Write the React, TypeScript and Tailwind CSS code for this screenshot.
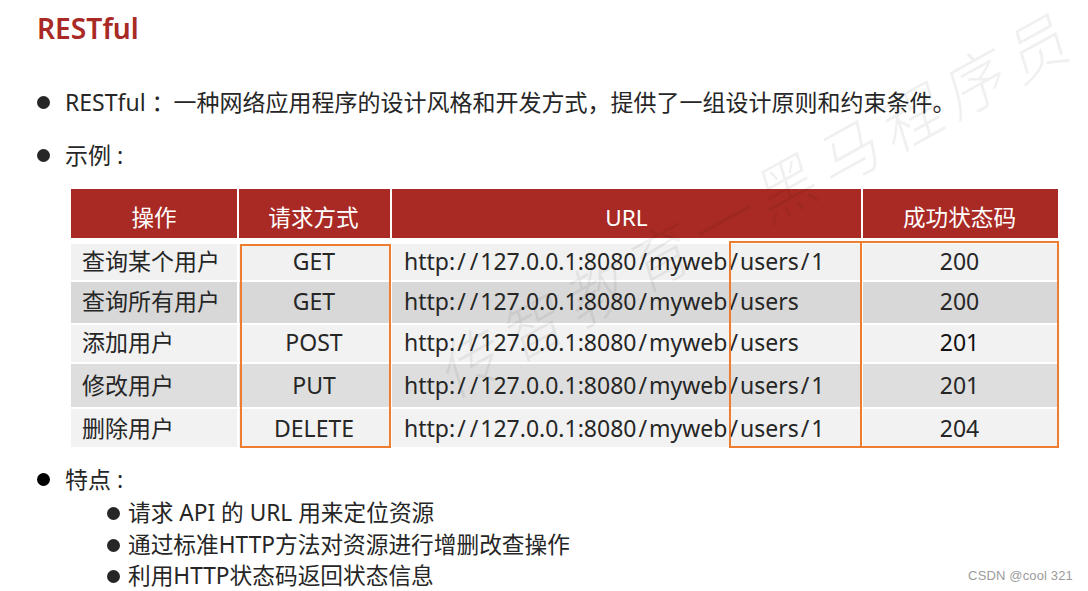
const rows = [
  { name: '查询某个用户', method: 'GET', url: 'http://127.0.0.1:8080/myweb/users/1', code: '200', h: 'h-[36px]', bg: 'bg-[#f1f1f1]', lift: 'pb-[2px]' },
  { name: '查询所有用户', method: 'GET', url: 'http://127.0.0.1:8080/myweb/users', code: '200', h: 'h-[41px]', bg: 'bg-[#d8d8d8]', lift: 'pb-[2px]' },
  { name: '添加用户', method: 'POST', url: 'http://127.0.0.1:8080/myweb/users', code: '201', h: 'h-[37px]', bg: 'bg-[#f2f2f2]', lift: 'pb-[2px]' },
  { name: '修改用户', method: 'PUT', url: 'http://127.0.0.1:8080/myweb/users/1', code: '201', h: 'h-[43px]', bg: 'bg-[#dedede]', lift: '' },
  { name: '删除用户', method: 'DELETE', url: 'http://127.0.0.1:8080/myweb/users/1', code: '204', h: 'h-[38px]', bg: 'bg-[#f2f2f2]', lift: '' },
];

const subItems = ['请求 API 的 URL 用来定位资源', '通过标准HTTP方法对资源进行增删改查操作', '利用HTTP状态码返回状态信息'];

function Dot({ className = 'bg-[#262626]' }: { className?: string }) {
  return <span className={`block w-[13px] h-[13px] rounded-full shrink-0 ${className}`}></span>;
}

// the slashes sit wider apart than the font sets them
function Url({ value }: { value: string }) {
  const parts = value.split('/');
  return (
    <span>
      {parts.map((part, i) => (
        <span key={i}>
          {i > 0 && <span className="px-[2px]">/</span>}
          {part}
        </span>
      ))}
    </span>
  );
}

export default function App() {
  return (
    <div className="relative w-[1088px] h-[591px] overflow-hidden bg-white text-[#262626] font-['Noto_Sans','Noto_Sans_CJK_SC',sans-serif]">
      <div className="pl-[37px] pt-[9px]">
        <h1 className="text-[28.2px] leading-[38px] font-semibold text-[#a92a25]">RESTful</h1>

        <div className="mt-[39px] flex items-center h-[32px] text-[23px]">
          <Dot />
          <p className="ml-[16px] -translate-x-px whitespace-nowrap">RESTful ：<span className="-ml-[1px]">一种网络应用程序的设计风格和开发方式，提供了一组设计原则和约束条件。</span></p>
        </div>
        <div className="mt-[21px] flex items-center h-[32px] text-[23px]">
          <Dot />
          <p className="ml-[16px] -translate-x-px whitespace-nowrap">示例 :</p>
        </div>
      </div>

      {/* table */}
      <div className="relative ml-[71px] mt-[18px] w-[987px]">
        <div className="flex gap-[2px] h-[49px] text-white text-[22.6px] mb-[6px]">
          <div className="w-[166px] bg-[#a92a25] flex items-center justify-center pt-[9px]">操作</div>
          <div className="w-[151px] bg-[#a92a25] flex items-center justify-center pt-[9px] pr-[2px]">请求方式</div>
          <div className="w-[469px] bg-[#a92a25] flex items-center justify-center pt-[9px]">URL</div>
          <div className="w-[195px] bg-[#a92a25] flex items-center justify-center pt-[9px] pr-[2px]">成功状态码</div>
        </div>
        <div className="flex flex-col gap-[2px] text-[23px]">
          {rows.map((row) => (
            <div key={row.name} className={`flex gap-[2px] ${row.h}`}>
              <div className={`w-[166px] pl-[11px] flex items-center ${row.bg} ${row.lift}`}>{row.name}</div>
              <div className={`w-[151px] pr-[1px] flex items-center justify-center ${row.bg} ${row.lift}`}>{row.method}</div>
              <div className={`w-[469px] pl-[12px] flex items-center ${row.bg} ${row.lift}`}><Url value={row.url} /></div>
              <div className={`w-[195px] pr-[2px] flex items-center justify-center ${row.bg} ${row.lift} ${row.name === '添加用户' ? 'text-[#111111]' : ''}`}>{row.code}</div>
            </div>
          ))}
        </div>

        {/* orange highlight boxes */}
        <div className="absolute left-[169px] top-[55px] w-[151px] h-[204px] border-2 border-[#ed7d31]"></div>
        <div className="absolute left-[658px] top-[52px] w-[133px] h-[207px] border-2 border-[#ed7d31]"></div>
        <div className="absolute left-[789px] top-[52px] w-[199px] h-[207px] border-2 border-[#ed7d31]"></div>
      </div>

      <div className="pl-[37px] mt-[16px]">
        <div className="flex items-center h-[32px] text-[23px]">
          <Dot className="bg-black" />
          <p className="ml-[16px] -translate-x-px whitespace-nowrap">特点 :</p>
        </div>
        <ul className="ml-[70px] mt-[2px] flex flex-col text-[22.7px]">
          {subItems.map((item) => (
            <li key={item} className="flex items-center h-[32px] last:h-[31px]">
              <Dot />
              <span className="ml-[8px] whitespace-nowrap">{item}</span>
            </li>
          ))}
        </ul>
      </div>

      {/* watermarks */}
      <div className="absolute left-[400px] top-[170px] text-[62px] leading-none tracking-[10px] whitespace-nowrap font-extralight text-black/[0.06] -rotate-[29deg] -skew-x-12 pointer-events-none">
        传智教育一黑马程序员
      </div>
      <div className="absolute right-[15px] top-[568px] text-[13px] leading-[16px] tracking-[0.15px] text-[#9b9b9b] font-['Liberation_Sans',sans-serif]">
        CSDN @cool 321
      </div>
    </div>
  );
}
